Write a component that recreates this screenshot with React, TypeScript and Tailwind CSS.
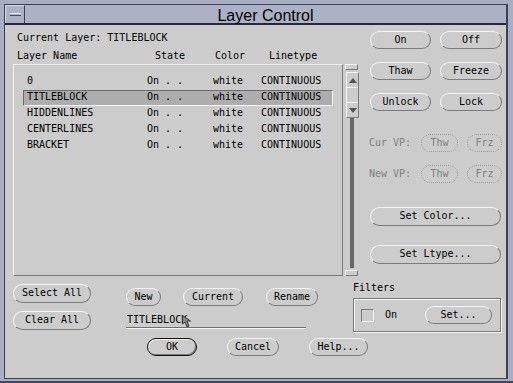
import React from "react";

const mono = "font-['DejaVu_Sans_Mono','Liberation_Mono',monospace] text-[10px] leading-[12px]";

type BtnProps = { className?: string; children: React.ReactNode };

// raised rounded motif-style button
const Btn = ({ className = "", children }: BtnProps) => (
  <div
    className={`flex shrink-0 items-center justify-center rounded-full border border-t-[#f4f4f4] border-l-[#f4f4f4] border-r-[#7c7c7c] border-b-[#7c7c7c] pb-px text-black ${className}`}
  >
    {children}
  </div>
);

// greyed out (insensitive) button
const DimBtn = ({ className = "", children }: BtnProps) => (
  <div
    className={`flex shrink-0 items-center justify-center rounded-full border border-dotted border-[#9a9a9a] pb-px text-[#808080] ${className}`}
  >
    {children}
  </div>
);

const layers = [
  { name: "0", active: false },
  { name: "TITLEBLOCK", active: true },
  { name: "HIDDENLINES", active: false },
  { name: "CENTERLINES", active: false },
  { name: "BRACKET", active: false },
];

const Arrow = ({ up }: { up: boolean }) => (
  <svg width="8" height="5" viewBox="0 0 8 5">
    <polygon points={up ? "0,5 4,0 8,5" : "0,0 8,0 4,5"} fill="#555" />
  </svg>
);

export default function App() {
  return (
    <div className={`h-[383px] w-[513px] border-b-2 border-[#45485c] bg-[#aaaec3] pt-[4px] pl-[4px] pr-[5px] pb-[2px] ${mono}`}>
      <div className="flex h-full flex-col border border-r-2 border-[#3c3f55]">
        {/* Title bar */}
        <div className="flex h-[20px] shrink-0 border-b-2 border-[#25273a] bg-[#adb1c6]">
          <div className="flex h-[18px] w-[20px] items-center justify-center border-t border-l border-r border-t-[#d6d9e6] border-l-[#d6d9e6] border-r-[#3c3f55]">
            <div className="h-[3px] w-[11px] border-t border-b border-t-[#e4e6ef] border-b-[#4a4d62]" />
          </div>
          <div className="flex-1 pt-[3px] text-center font-['Liberation_Sans',Arial,sans-serif] text-[16px] leading-[15px] text-black">
            Layer Control
          </div>
        </div>

        {/* Body */}
        <div className="flex-1 bg-[#cccccc] text-black">
          <div className="flex items-start">
            {/* Left: layer list */}
            <div className="ml-[8px] w-[346px]">
              <div className="mt-[7px] h-[12px] pl-[4px]">Current Layer: TITLEBLOCK</div>
              <div className="mt-[6px] flex h-[12px] pl-[4px]">
                <span className="w-[138px]">Layer Name</span>
                <span className="w-[60px]">State</span>
                <span className="w-[54px]">Color</span>
                <span>Linetype</span>
              </div>
              <div className="mt-[2px] flex">
                <div className="h-[212px] w-[330px] border border-t-[#f2f2f2] border-l-[#f2f2f2] border-r-[#7a7a7a] border-b-[#7a7a7a] pt-[9px] pl-[9px]">
                  {layers.map((l) => (
                    <div
                      key={l.name}
                      className={
                        l.active
                          ? "flex h-[16px] w-[310px] border border-t-[#6b6b6b] border-l-[#6b6b6b] border-r-[#f4f4f4] border-b-[#f4f4f4] bg-[#adadad] pl-[3px]"
                          : "flex h-[16px] w-[310px] border border-transparent pl-[3px]"
                      }
                    >
                      <span className="w-[120px]">{l.name}</span>
                      <span className="w-[66px]">On . .</span>
                      <span className="w-[48px]">white</span>
                      <span>CONTINUOUS</span>
                    </div>
                  ))}
                </div>

                {/* Scrollbar */}
                <div className="ml-[2px] flex w-[14px] flex-col">
                  <div className="h-[6px] w-[13px] border border-t-[#f4f4f4] border-l-[#f4f4f4] border-r-[#7a7a7a] border-b-[#7a7a7a]" />
                  <div className="mt-[2px] ml-px flex h-[46px] w-[13px] flex-col border border-t-[#f4f4f4] border-l-[#f4f4f4] border-r-[#7a7a7a] border-b-[#7a7a7a]">
                    <div className="flex h-[15px] items-center justify-center border-b border-[#f4f4f4]">
                      <Arrow up />
                    </div>
                    <div className="h-[15px] border-b border-[#f4f4f4]" />
                    <div className="flex flex-1 items-center justify-center">
                      <Arrow up={false} />
                    </div>
                  </div>
                  <div className="flex h-[150px] justify-center">
                    <div className="w-[4px] bg-[#676767]" />
                  </div>
                  <div className="mt-[2px] h-[6px] w-[13px] border border-t-[#f4f4f4] border-l-[#f4f4f4] border-r-[#7a7a7a] border-b-[#7a7a7a]" />
                </div>
              </div>
            </div>

            {/* Right: state buttons */}
            <div className="ml-[11px] flex w-[132px] flex-col">
              <div className="mt-[6px] flex gap-[9px]">
                <Btn className="h-[18px] w-[61px]">On</Btn>
                <Btn className="h-[18px] w-[62px]">Off</Btn>
              </div>
              <div className="mt-[13px] flex gap-[9px]">
                <Btn className="h-[18px] w-[61px]">Thaw</Btn>
                <Btn className="h-[18px] w-[62px]">Freeze</Btn>
              </div>
              <div className="mt-[13px] flex gap-[9px]">
                <Btn className="h-[18px] w-[61px]">Unlock</Btn>
                <Btn className="h-[18px] w-[62px]">Lock</Btn>
              </div>
              <div className="mt-[23px] flex items-center">
                <span className="-ml-px w-[52px] text-[#808080]">Cur VP:</span>
                <DimBtn className="h-[18px] w-[37px]">Thw</DimBtn>
                <DimBtn className="ml-[9px] h-[18px] w-[35px]">Frz</DimBtn>
              </div>
              <div className="mt-[13px] flex items-center">
                <span className="-ml-px w-[52px] text-[#808080]">New VP:</span>
                <DimBtn className="h-[18px] w-[37px]">Thw</DimBtn>
                <DimBtn className="ml-[9px] h-[18px] w-[35px]">Frz</DimBtn>
              </div>
              <Btn className="mt-[24px] h-[19px] w-[131px]">Set Color...</Btn>
              <Btn className="mt-[19px] h-[19px] w-[131px]">Set Ltype...</Btn>
            </div>
          </div>

          {/* Lower controls */}
          <div className="flex items-start">
            <div className="ml-[8px] flex w-[78px] flex-col">
              <Btn className="mt-[8px] h-[19px] w-[78px]">Select All</Btn>
              <Btn className="mt-[8px] h-[19px] w-[78px]">Clear All</Btn>
            </div>
            <div className="ml-[35px] flex w-[192px] flex-col">
              <div className="mt-[12px] flex">
                <Btn className="h-[18px] w-[35px]">New</Btn>
                <Btn className="ml-[22px] h-[18px] w-[60px]">Current</Btn>
                <Btn className="ml-[23px] h-[18px] w-[52px]">Rename</Btn>
              </div>
              <div className="relative mt-[8px] h-[14px] w-[180px] border-b border-[#707070] pl-px shadow-[0_1px_0_#f4f4f4]">
                TITLEBLOCK
                {/* mouse pointer */}
                <svg className="absolute top-[1px] left-[56px]" width="10" height="13" viewBox="0 0 10 13">
                  <polygon points="0.5,0.5 0.5,9 3,7 5,12 7,11 5,6 8.5,6" fill="#8a8a8a" stroke="#222" strokeWidth="0.8" />
                </svg>
              </div>
            </div>
            <div className="ml-[35px] flex w-[148px] flex-col">
              <div className="mt-[6px] h-[12px]">Filters</div>
              <div className="mt-[4px] flex h-[34px] items-center border border-[#7a7a7a] pl-[7px] shadow-[1px_1px_0_#f4f4f4,inset_1px_1px_0_#f4f4f4]">
                <div className="h-[13px] w-[13px] border border-t-[#7a7a7a] border-l-[#7a7a7a] border-r-[#f4f4f4] border-b-[#f4f4f4]" />
                <span className="ml-[11px] w-[40px]">On</span>
                <Btn className="h-[18px] w-[67px]">Set...</Btn>
              </div>
            </div>
          </div>

          <div className="mt-[6px] flex">
            <div className="ml-[142px] flex h-[18px] w-[50px] shrink-0 items-center justify-center rounded-full border border-[#111] pb-px shadow-[inset_1px_1px_0_#f4f4f4,inset_-1px_-1px_0_#7c7c7c]">
              OK
            </div>
            <Btn className="ml-[30px] h-[18px] w-[52px]">Cancel</Btn>
            <Btn className="ml-[30px] h-[18px] w-[59px]">Help...</Btn>
          </div>
        </div>
      </div>
    </div>
  );
}
